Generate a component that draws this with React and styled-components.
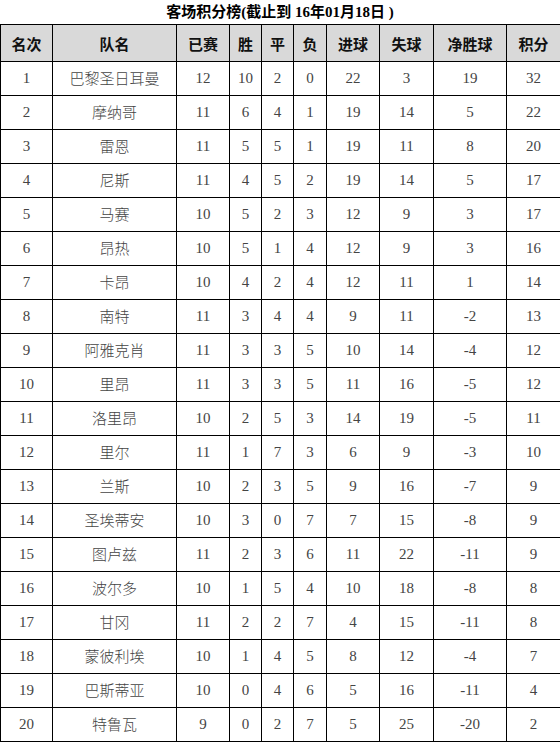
import React from "react";
import styled, { createGlobalStyle } from "styled-components";

const rows = [
  [1, "巴黎圣日耳曼", 12, 10, 2, 0, 22, 3, 19, 32],
  [2, "摩纳哥", 11, 6, 4, 1, 19, 14, 5, 22],
  [3, "雷恩", 11, 5, 5, 1, 19, 11, 8, 20],
  [4, "尼斯", 11, 4, 5, 2, 19, 14, 5, 17],
  [5, "马赛", 10, 5, 2, 3, 12, 9, 3, 17],
  [6, "昂热", 10, 5, 1, 4, 12, 9, 3, 16],
  [7, "卡昂", 10, 4, 2, 4, 12, 11, 1, 14],
  [8, "南特", 11, 3, 4, 4, 9, 11, -2, 13],
  [9, "阿雅克肖", 11, 3, 3, 5, 10, 14, -4, 12],
  [10, "里昂", 11, 3, 3, 5, 11, 16, -5, 12],
  [11, "洛里昂", 10, 2, 5, 3, 14, 19, -5, 11],
  [12, "里尔", 11, 1, 7, 3, 6, 9, -3, 10],
  [13, "兰斯", 10, 2, 3, 5, 9, 16, -7, 9],
  [14, "圣埃蒂安", 10, 3, 0, 7, 7, 15, -8, 9],
  [15, "图卢兹", 11, 2, 3, 6, 11, 22, -11, 9],
  [16, "波尔多", 10, 1, 5, 4, 10, 18, -8, 8],
  [17, "甘冈", 11, 2, 2, 7, 4, 15, -11, 8],
  [18, "蒙彼利埃", 10, 1, 4, 5, 8, 12, -4, 7],
  [19, "巴斯蒂亚", 10, 0, 4, 6, 5, 16, -11, 4],
  [20, "特鲁瓦", 9, 0, 2, 7, 5, 25, -20, 2],
];

const headers = ["名次", "队名", "已赛", "胜", "平", "负", "进球", "失球", "净胜球", "积分"];
const widths = [52, 124, 53, 32, 32, 33, 53, 54, 73, 54];

const GlobalStyle = createGlobalStyle`
  body {
    margin: 0;
    background: #fff;
    font-family: "Liberation Serif", "Noto Sans CJK SC", serif;
  }
`;

const Page = styled.div`
  width: 560px;
`;

const Title = styled.h1`
  margin: 0;
  height: 24px;
  line-height: 24px;
  text-align: center;
  font-size: 15px;
  font-weight: bold;
  color: #000;
  font-family: "Liberation Serif", "Noto Sans CJK SC", serif;
`;

const Table = styled.table`
  width: 560px;
  border-collapse: collapse;
  table-layout: fixed;
`;

const HeadCell = styled.th`
  height: 36px;
  padding: 0;
  border: 1px solid #000;
  background: #d9d9d9;
  font-family: "Noto Sans CJK SC", sans-serif;
  font-size: 15px;
  line-height: 1;
  font-weight: bold;
  color: #111;
  text-align: center;
`;

const Cell = styled.td`
  height: ${(p) => (p.$name ? "30px" : "33px")};
  padding: ${(p) => (p.$name ? "0 0 3px" : "0")};
  border: 1px solid #000;
  text-align: center;
  line-height: 1;
  color: #444;
  font-size: 15px;
  font-family: ${(p) =>
    p.$name ? '"Noto Sans CJK SC", sans-serif' : '"Liberation Serif", serif'};
  font-weight: ${(p) => (p.$name ? 300 : "normal")};
`;

export default function App() {
  return (
    <Page>
      <GlobalStyle />
      <Title>客场积分榜(截止到 16年01月18日 )</Title>
      <Table>
        <colgroup>
          {widths.map((w, i) => (
            <col key={i} style={{ width: w }} />
          ))}
        </colgroup>
        <thead>
          <tr>
            {headers.map((h) => (
              <HeadCell key={h}>{h}</HeadCell>
            ))}
          </tr>
        </thead>
        <tbody>
          {rows.map((r) => (
            <tr key={r[0]}>
              {r.map((v, i) => (
                <Cell key={i} $name={i === 1}>
                  {v}
                </Cell>
              ))}
            </tr>
          ))}
        </tbody>
      </Table>
    </Page>
  );
}
